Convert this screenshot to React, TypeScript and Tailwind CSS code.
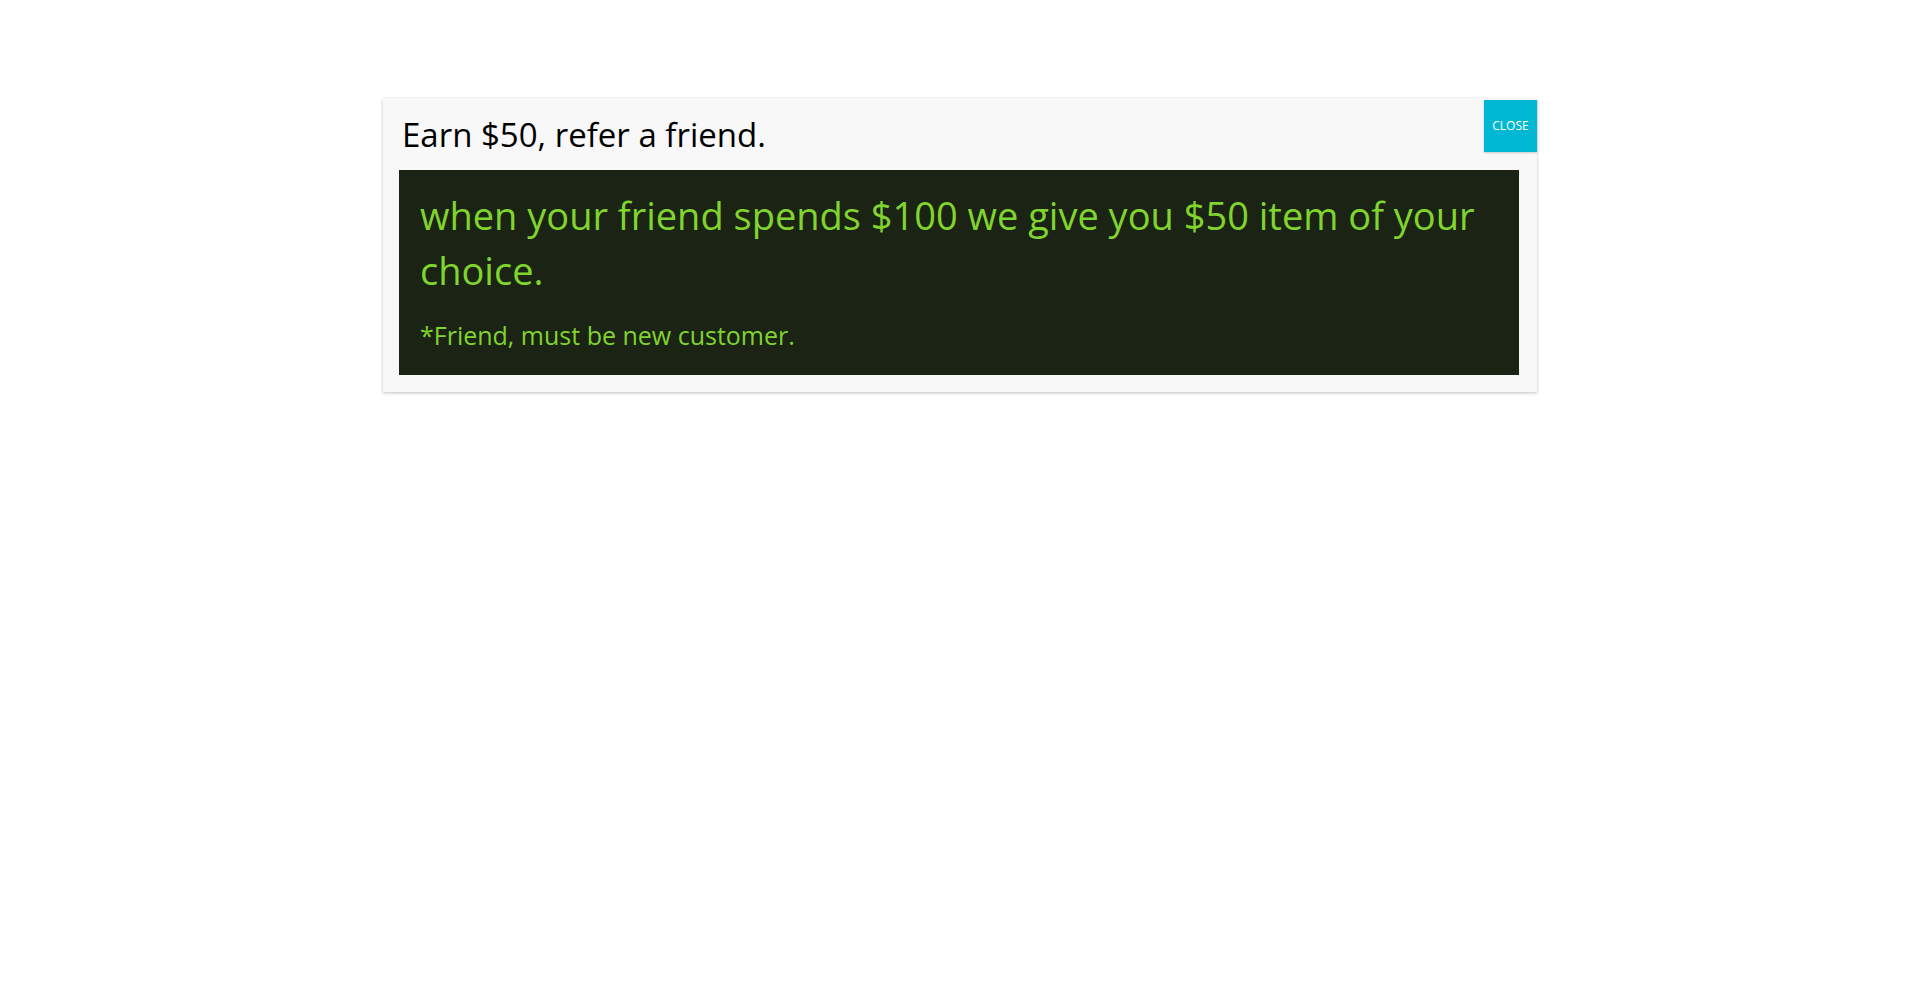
const ReferPopup = () => {
  return (
    <div className="min-h-[993px] w-full bg-white pt-[98px]">
      <div className="relative mx-auto w-[1154px] bg-[#f8f8f8] pb-[17px] pl-4 pr-[18px] pt-[15px] shadow-[0_1px_3px_rgba(0,0,0,0.25)] font-['Open_Sans',sans-serif]">
        <h2 className="pl-[3px] text-[33px] leading-[44px] text-black">Earn $50, refer a friend.</h2>
        <div className="mt-[13px] bg-[#1a2314] pb-[23px] pl-[21px] pr-4 pt-[18px] text-[#81d42d]">
          <p className="text-[38px] leading-[55px]">
            when your friend spends $100 we give you $50 item of your choice.
          </p>
          <p className="mt-[20px] text-[25px] leading-[34px]">*Friend, must be new customer.</p>
        </div>
        <button className="absolute right-0 top-[2px] flex h-[52px] w-[53px] items-center justify-center bg-[#00b8d4] text-[12px] text-white shadow-[0_1px_2px_rgba(0,0,0,0.2)]">
          CLOSE
        </button>
      </div>
    </div>
  );
};

export default ReferPopup;
